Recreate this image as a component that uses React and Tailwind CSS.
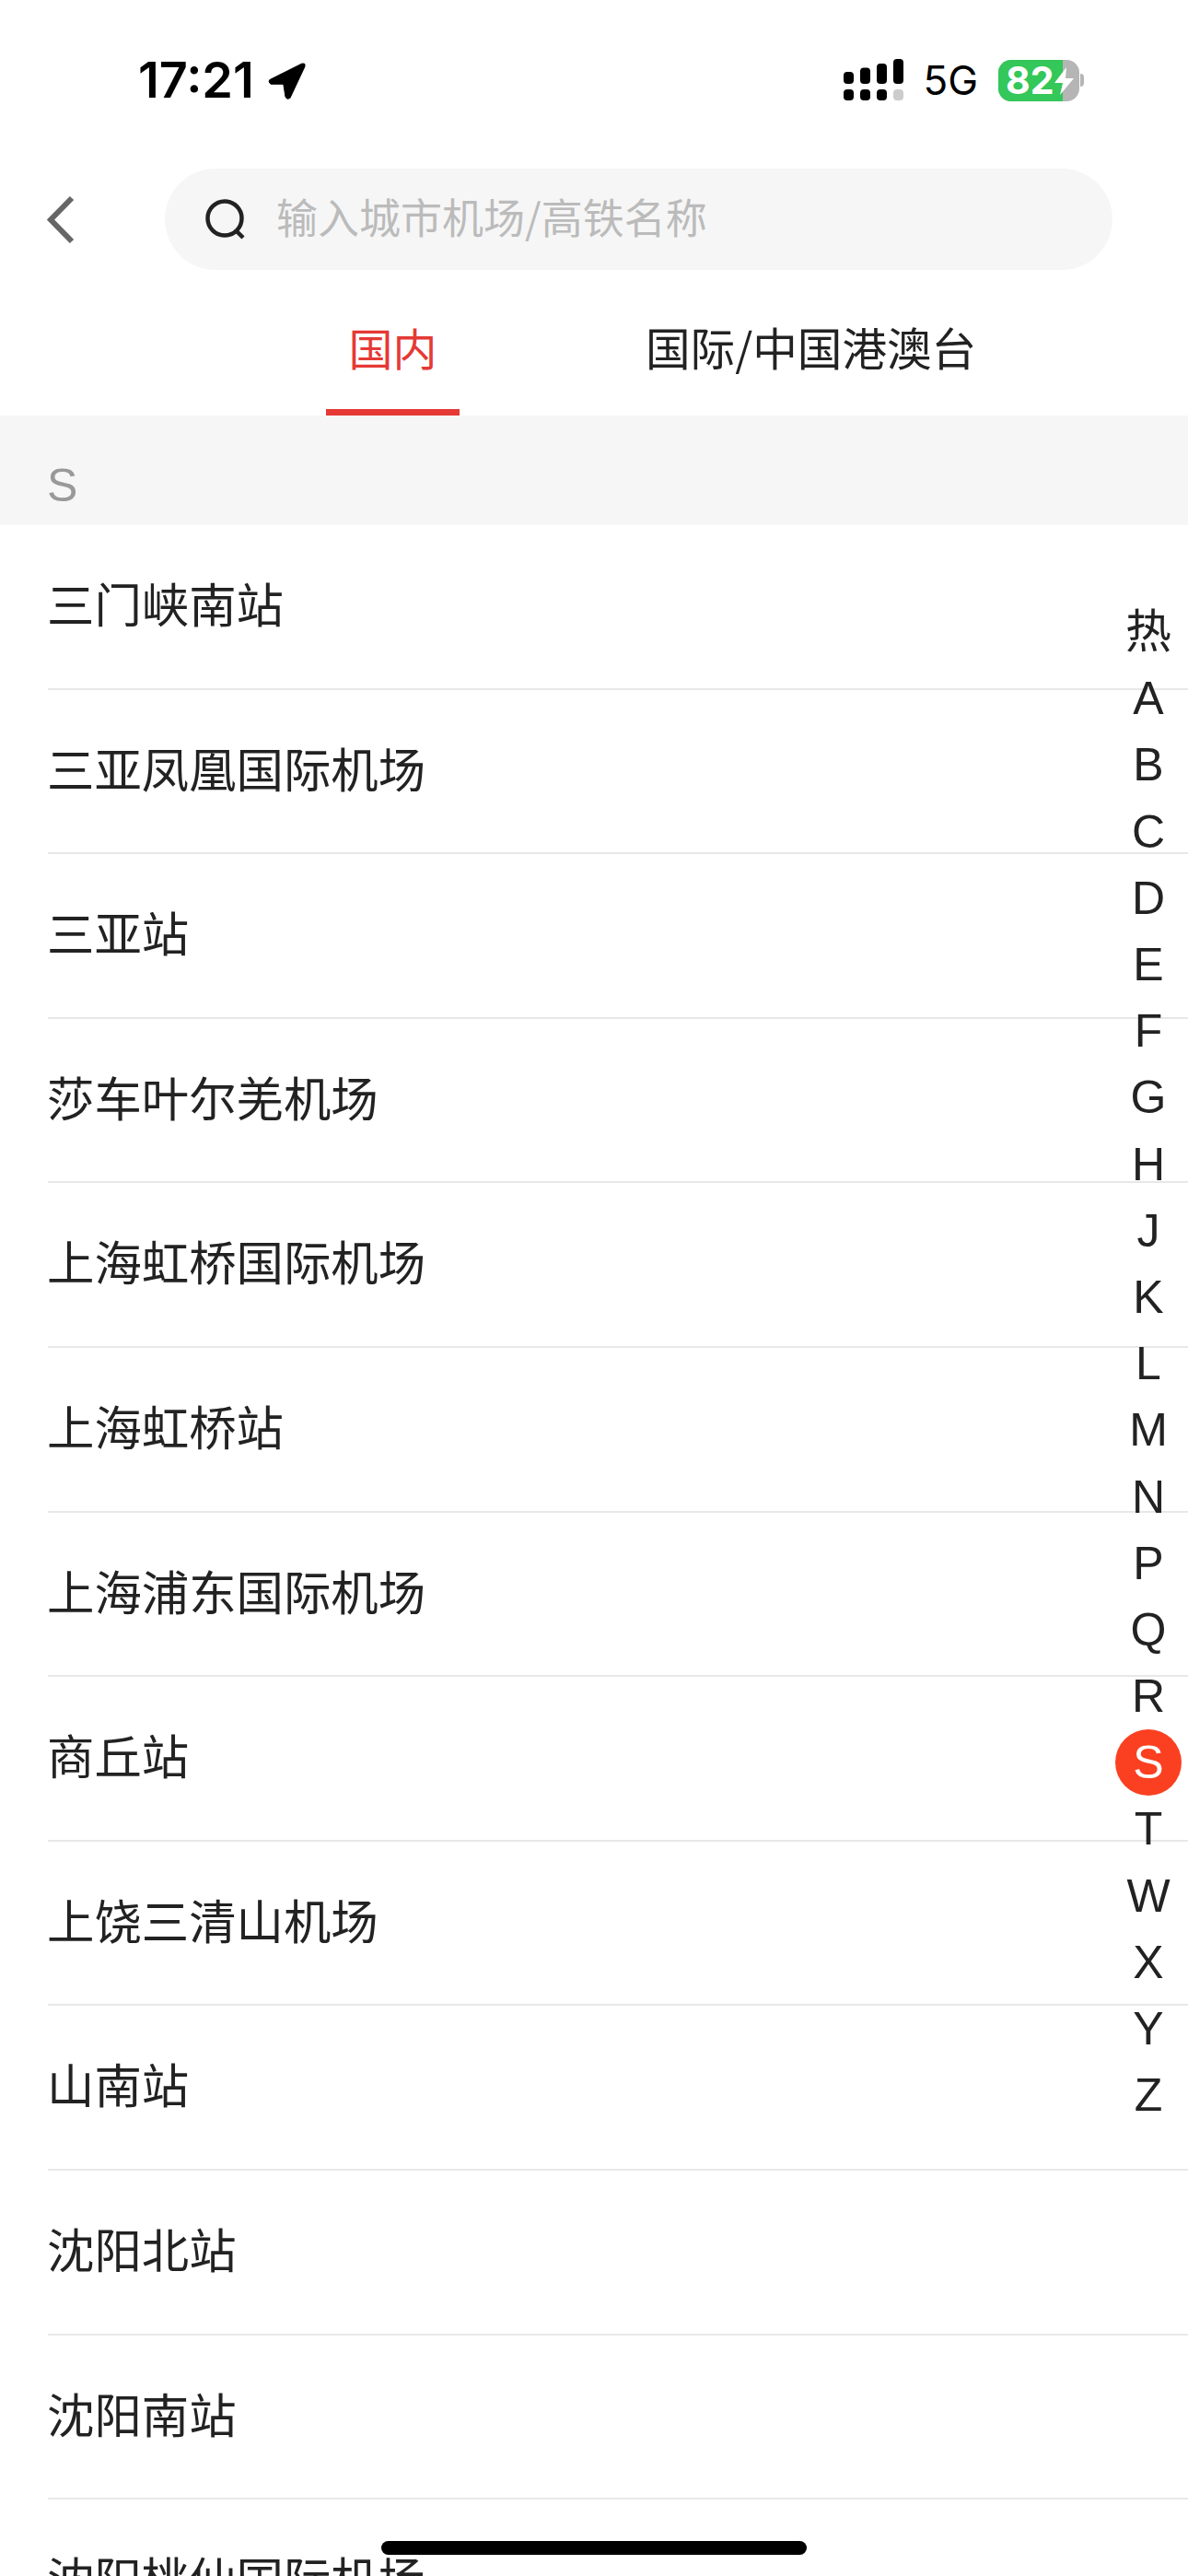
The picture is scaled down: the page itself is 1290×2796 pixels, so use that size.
const CJK = { fontFamily: '"Noto Sans CJK SC",sans-serif' };
const LATIN = { fontFamily: '"Liberation Sans","Noto Sans CJK SC",sans-serif' };

const stations = [
  "三门峡南站","三亚凤凰国际机场","三亚站","莎车叶尔羌机场","上海虹桥国际机场","上海虹桥站",
  "上海浦东国际机场","商丘站","上饶三清山机场","山南站","沈阳北站","沈阳南站","沈阳桃仙国际机场",
];
const letters = ["热","A","B","C","D","E","F","G","H","J","K","L","M","N","P","Q","R","S","T","W","X","Y","Z"];

function Signal() {
  const cols = [{ x: 0, y: 14, h: 13 }, { x: 18, y: 9.5, h: 17.5 }, { x: 36, y: 5, h: 22 }, { x: 54, y: 0, h: 27 }];
  return (
    <svg width="65" height="46" viewBox="0 0 65 46">
      {cols.map((c, i) => (
        <g key={i}>
          <rect x={c.x} y={c.y} width="11" height={c.h} rx="4" fill="#000" />
          <rect x={c.x} y="33" width="11" height="12" rx="4" fill={i === 3 ? "#cccccc" : "#000"} />
        </g>
      ))}
    </svg>
  );
}

function Battery() {
  return (
    <div className="flex items-center">
      <div className="relative flex h-[45px] w-[88px] overflow-hidden rounded-[14px] bg-[#b5b5b5]">
        <div className="w-[70px] bg-[#34c759]" />
        <span className="absolute left-[8px] top-0 text-[41px] leading-[45px] font-bold text-white font-['Inter',sans-serif]">82</span>
        <svg className="absolute left-[60px] top-[8px]" width="23" height="30" viewBox="0 0 23 30">
          <path d="M14 0 L1 17 H10 L7 30 L22 12 H13 Z" fill="#fff" />
        </svg>
      </div>
      <div className="ml-[1px] h-[14px] w-[4px] rounded-r-[4px] bg-[#b5b5b5]" />
    </div>
  );
}

export default function App() {
  return (
    <div className="relative h-[2796px] w-[1290px] overflow-hidden bg-white text-[#222222]" style={CJK}>
      <div className="flex h-[174px] items-center justify-between pl-[150px] pr-[113px]">
        <div className="flex items-center gap-[13px]">
          <span className="text-[54px] leading-none font-semibold text-black font-['Inter',sans-serif]">17:21</span>
          <svg width="45" height="45" viewBox="0 0 43 43">
            <path d="M5 20 L37 4 Q41 3 40 7 L25 39 Q22 42 20 38 L18 25 L5 25 Q1 22 5 20 Z" fill="#000" stroke="#000" strokeWidth="1" strokeLinejoin="round" />
          </svg>
        </div>
        <div className="flex items-center">
          <Signal />
          <span className="ml-[21px] mr-[22px] text-[44px] leading-none text-black font-['Inter',sans-serif]">5G</span>
          <Battery />
        </div>
      </div>

      <div className="mt-[9px] flex h-[110px] items-center pl-[50px]">
        <svg width="31" height="53" viewBox="0 0 31 53" fill="none">
          <path d="M28 3 L5 26.5 L28 50" stroke="#666666" strokeWidth="6" />
        </svg>
        <div className="ml-[98px] flex h-[110px] w-[1029px] items-center rounded-[55px] bg-[#f6f6f6] pl-[44px]">
          <svg width="44" height="44" viewBox="0 0 44 44" fill="none">
            <circle cx="21" cy="21" r="18.5" stroke="#222222" strokeWidth="4.5" />
            <path d="M33 34 L41 42" stroke="#222222" strokeWidth="4.5" />
          </svg>
          <span className="ml-[33px] pb-[7px] text-[45px] leading-none text-[#bbbbbb]">输入城市机场/高铁名称</span>
        </div>
      </div>

      <div className="flex h-[158px] pl-[354px]">
        <div className="flex w-[145px] items-center justify-center border-b-[7px] border-[#e53935] pt-[15px] text-[48px] leading-none text-[#e53935]">国内</div>
        <div className="ml-[202px] flex items-center border-b-[7px] border-transparent pt-[16px] text-[48.6px] leading-none">国际/中国港澳台</div>
      </div>

      <div className="flex h-[119px] items-end bg-[#f6f6f6] pb-[18px] pl-[51px] text-[50px] leading-none text-[#999999]" style={LATIN}>S</div>

      <div>
        {stations.map((s) => (
          <div key={s} className="ml-[52px] flex h-[178.6px] items-center border-b-2 border-[#e8e8e8] pb-[9px] text-[51.4px] leading-none">
            <span className="-ml-[1px]">{s}</span>
          </div>
        ))}
      </div>

      <div className="absolute right-[7px] top-[650px] w-[72px]" style={LATIN}>
        {letters.map((l) => (
          <div key={l} className="flex h-[72.2px] items-center justify-center text-[50px] leading-none">
            {l === "S" ? (
              <span className="flex h-[72px] w-[72px] items-center justify-center rounded-full bg-[#fb4021] text-white">S</span>
            ) : l}
          </div>
        ))}
      </div>

      <div className="absolute bottom-[23px] left-[414px] h-[15px] w-[462px] rounded-full bg-black" />
    </div>
  );
}
